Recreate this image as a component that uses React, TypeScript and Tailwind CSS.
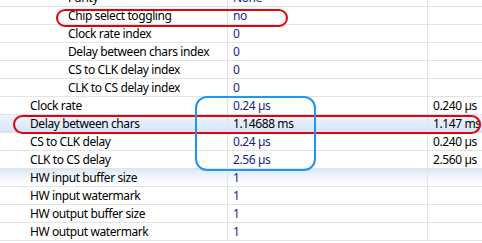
type Row = {
  label: string
  value: string
  extra?: string
  indent: 1 | 2
  state?: "selected" | "hover"
}

const rows: Row[] = [
  { label: "Parity", value: "None", indent: 2 },
  { label: "Chip select toggling", value: "no", indent: 2 },
  { label: "Clock rate index", value: "0", indent: 2 },
  { label: "Delay between chars index", value: "0", indent: 2 },
  { label: "CS to CLK delay index", value: "0", indent: 2 },
  { label: "CLK to CS delay index", value: "0", indent: 2 },
  { label: "Clock rate", value: "0.24 µs", extra: "0.240 µs", indent: 1 },
  { label: "Delay between chars", value: "1.14688 ms", extra: "1.147 ms", indent: 1, state: "selected" },
  { label: "CS to CLK delay", value: "0.24 µs", extra: "0.240 µs", indent: 1 },
  { label: "CLK to CS delay", value: "2.56 µs", extra: "2.560 µs", indent: 1 },
  { label: "HW input buffer size", value: "1", indent: 1, state: "hover" },
  { label: "HW input watermark", value: "1", indent: 1 },
  { label: "HW output buffer size", value: "1", indent: 1 },
  { label: "HW output watermark", value: "1", indent: 1 },
]

function PropRow({ row }: { row: Row }) {
  const bg =
    row.state === "selected"
      ? "bg-gradient-to-b from-[#eef5fd] to-[#d5e5f8]"
      : row.state === "hover"
        ? "bg-gradient-to-b from-[#dbe8f8] via-[#f3f7fd] to-white"
        : "bg-white"
  const valueColor = row.state === "selected" ? "text-black" : "text-[#1c1c8c]"

  return (
    <div className={`flex h-[18px] border-b border-[#e3e3e3] whitespace-nowrap ${bg}`}>
      <div
        className={`w-[228px] shrink-0 overflow-hidden border-r border-[#e3e3e3] leading-[17px] text-black ${
          row.indent === 2 ? "pl-[68px]" : "pl-[30px]"
        }`}
      >
        {row.label}
      </div>
      <div className={`w-[200px] shrink-0 overflow-hidden border-r border-[#e3e3e3] pl-[5px] leading-[17px] ${valueColor}`}>
        {row.value}
      </div>
      <div className="min-w-0 flex-1 overflow-hidden pl-[5px] leading-[17px] text-black">{row.extra}</div>
    </div>
  )
}

export default function App() {
  return (
    <div
      className="relative h-[243px] w-[482px] overflow-hidden bg-white text-[12px] tracking-[-0.4px]"
      style={{ fontFamily: '"Noto Sans", "DejaVu Sans", sans-serif' }}
    >
      <div className="-mt-[11px]">
        {rows.map((row) => (
          <PropRow key={row.label} row={row} />
        ))}
      </div>

      {/* annotations */}
      <div className="pointer-events-none absolute left-[56px] top-[9px] h-[18px] w-[232px] rounded-[9px] border-2 border-[#e8000b]" />
      <div className="pointer-events-none absolute left-[13px] top-[115px] h-[19px] w-[468px] rounded-[10px] border-2 border-[#e8000b]" />
      <div className="pointer-events-none absolute left-[195px] top-[96px] h-[75px] w-[121px] rounded-[12px] border-2 border-[#2196f0]" />
    </div>
  )
}
